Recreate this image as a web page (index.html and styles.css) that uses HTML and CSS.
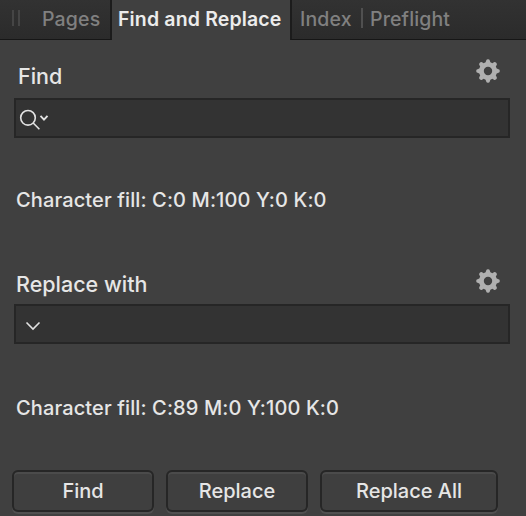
FILE: index.html
```html
<!DOCTYPE html>
<html lang="en">
<head>
<meta charset="utf-8">
<title>Find and Replace</title>
<link rel="stylesheet" href="styles.css">
</head>
<body>
<svg width="0" height="0" class="defs">
  <symbol id="gear" viewBox="0 0 24 24">
    <path fill-rule="evenodd" d="M12 0.2Q13.5 0.2 13.8 1.5L14.4 3.3L16.4 4.2L17.9 3.2Q19 2.5 20.2 3.8Q21.4 5 20.7 6.1L19.8 7.6L20.7 9.6L22.5 10.2Q23.8 10.5 23.8 12Q23.8 13.5 22.5 13.8L20.7 14.4L19.8 16.4L20.7 17.9Q21.4 19 20.2 20.2Q19 21.4 17.9 20.7L16.4 19.8L14.4 20.7L13.8 22.5Q13.5 23.8 12 23.8Q10.5 23.8 10.2 22.5L9.6 20.7L7.6 19.8L6.1 20.7Q5 21.4 3.8 20.2Q2.6 19 3.3 17.9L4.2 16.4L3.3 14.4L1.5 13.8Q.2 13.5 .2 12Q.2 10.5 1.5 10.2L3.3 9.6L4.2 7.6L3.3 6.1Q2.6 5 3.8 3.8Q5 2.5 6.1 3.3L7.6 4.2L9.6 3.3L10.2 1.5Q10.5.2 12 .2ZM12 7.8A4.2 4.2 0 1 0 12 16.2A4.2 4.2 0 1 0 12 7.8Z"/>
  </symbol>
</svg>
<div class="panel">
  <nav class="tabs">
    <div class="tab-group tab-group-left">
      <span class="grip"></span>
      <span class="tab tab-pages">Pages</span>
    </div>
    <div class="tab tab-active"><span>Find and Replace</span></div>
    <div class="tab-group tab-group-right">
      <span class="tab tab-index">Index</span>
      <span class="divider"></span>
      <span class="tab tab-preflight">Preflight</span>
    </div>
  </nav>
  <section class="section section-find">
    <header class="heading">
      <h2 class="title title-find">Find</h2>
      <svg class="gear"><use href="#gear"/></svg>
    </header>
    <div class="field">
      <svg class="search" width="34" height="24" viewBox="0 0 34 24">
        <circle cx="12" cy="9.8" r="7.3"/>
        <path d="M17.2 15L23.4 21.2"/>
        <path class="small-arrow" d="M24.5 7.8L28 11.6L31.5 7.8"/>
      </svg>
    </div>
    <p class="summary">Character fill: C:0 M:100 Y:0 K:0</p>
  </section>
  <section class="section section-replace">
    <header class="heading">
      <h2 class="title title-replace">Replace with</h2>
      <svg class="gear"><use href="#gear"/></svg>
    </header>
    <div class="field">
      <svg class="chevron" width="16" height="10" viewBox="0 0 16 10"><path d="M1.5 1.5L8 8L14.5 1.5"/></svg>
    </div>
    <p class="summary">Character fill: C:89 M:0 Y:100 K:0</p>
  </section>
  <footer class="actions">
    <button class="button">Find</button>
    <button class="button">Replace</button>
    <button class="button button-all">Replace All</button>
  </footer>
</div>
</body>
</html>
```

FILE: styles.css
```css
* { box-sizing: border-box; }
body {
  margin: 0;
  background: #404040;
  color: #e6e6e6;
  font-family: Inter, "Liberation Sans", sans-serif;
  font-size: 20px;
  overflow: hidden;
}
.defs { position: absolute; }
.panel { width: 526px; height: 516px; overflow: hidden; }
.tabs { display: flex; height: 40px; line-height: 39px; white-space: nowrap; }
.tab-group {
  display: flex;
  background: linear-gradient(#323232, #2b2b2b);
  border-bottom: 1px solid #161616;
  color: #808080;
}
.tab-group-left { width: 112px; border-right: 2px solid #1c1c1c; padding-left: 12px; }
.tab-group-right { flex: 1; border-left: 2px solid #1c1c1c; padding-left: 8px; }
.grip {
  width: 8px;
  height: 16px;
  margin: 10px 22px 0 0;
  border: solid #454545;
  border-width: 0 2px;
}
.tab { font-size: 19.5px; font-weight: 500; letter-spacing: 0.15px; }
.tab-active { width: 178px; padding-left: 6px; color: #ececec; font-weight: 600; }
.tab-index { width: 61px; }
.divider { width: 2px; height: 20px; margin: 8px 7px 0 0; background: #505050; }
.heading { display: flex; justify-content: space-between; }
.title { margin: 0; font-size: 21.5px; font-weight: 500; line-height: 28px; }
.gear { width: 24px; height: 24px; fill: #b0b0b0; }
.section { height: 208px; padding: 0 16px 0 14px; }
.section-find { padding-top: 19px; height: 206px; }
.section-replace { padding-top: 23px; }
.heading { height: 39px; padding-right: 10px; }
.section-replace .heading { height: 35px; }
.title-find { padding: 3px 0 0 4px; }
.title-replace { padding: 1px 0 0 2px; }
.field {
  display: flex;
  align-items: center;
  height: 40px;
  background: #333;
  border: 2px solid #262626;
}
.field svg { fill: none; stroke: #e2e2e2; stroke-width: 1.6; }
.search { margin-top: 3px; }
.field .small-arrow { stroke-width: 1.9; }
.chevron { margin: 4px 0 0 9px; }
.summary {
  margin: 48px 0 0 2px;
  font-weight: 500;
  line-height: 28px;
  letter-spacing: 0.12px;
  white-space: nowrap;
}
.section-replace .summary { margin-top: 50px; }
.actions { display: flex; gap: 12px; padding: 16px 0 0 12px; }
.button {
  width: 142px;
  height: 42px;
  padding: 0;
  border: 2px solid #262626;
  border-radius: 6px;
  background: #3f3f3f;
  box-shadow: inset 0 2px #4b4b4b, 0 2px #505050;
  color: #e6e6e6;
  font: 500 20px/36px Inter, "Liberation Sans", sans-serif;
}
.button-all { width: 178px; }
```
